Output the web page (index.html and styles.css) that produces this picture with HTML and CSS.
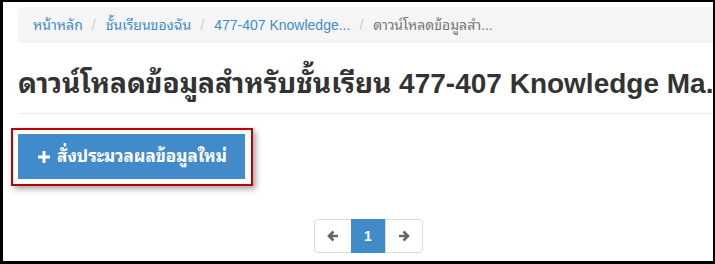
FILE: index.html
```html
<!DOCTYPE html>
<html lang="th">
<head>
<meta charset="utf-8">
<link rel="stylesheet" href="styles.css">
</head>
<body>
<div class="frame">
  <div class="container">
    <ol class="breadcrumb">
      <li><a href="#">หน้าหลัก</a></li>
      <li><a href="#">ชั้นเรียนของฉัน</a></li>
      <li><a href="#">477-407 Knowledge...</a></li>
      <li class="crumb-current">ดาวน์โหลดข้อมูลสำ...</li>
    </ol>
    <h1 class="page-header">ดาวน์โหลดข้อมูลสำหรับชั้นเรียน 477-407 Knowledge Ma...</h1>
    <div class="highlight">
      <a class="btn-primary" href="#">
        <svg class="plus" width="12" height="12" viewBox="0 0 12 12"><path d="M4.5 0h3v4.5H12v3H7.5V12h-3V7.5H0v-3h4.5z" fill="#fff"/></svg>
        <span>สั่งประมวลผลข้อมูลใหม่</span>
      </a>
    </div>
    <div class="pager-row">
      <ul class="pagination">
        <li class="page first"><svg width="12" height="12" viewBox="0 0 12 12"><path d="M11 6H2.5M6.5 1.5L2 6l4.5 4.5" fill="none" stroke="#666" stroke-width="2.6"/></svg></li>
        <li class="page current">1</li>
        <li class="page last"><svg width="12" height="12" viewBox="0 0 12 12"><path d="M1 6h8.5M5.5 1.5L10 6l-4.5 4.5" fill="none" stroke="#666" stroke-width="2.6"/></svg></li>
      </ul>
    </div>
  </div>
</div>
</body>
</html>
```

FILE: styles.css
```css
html, body {
  margin: 0;
  padding: 0;
  background: #fff;
}
body {
  font-family: "Liberation Sans", "Noto Sans Thai Looped", Arial, sans-serif;
  font-size: 14px;
  line-height: 20px;
  color: #333;
}
.frame {
  width: 715px;
  height: 264px;
  box-sizing: border-box;
  border-style: solid;
  border-color: #000;
  border-width: 2px 2px 3px 3px;
  overflow: hidden;
  background: #fff;
}
.container {
  width: 700px;
  padding: 5px 0 0 15px;
}
.breadcrumb {
  display: flex;
  list-style: none;
  margin: 0;
  padding: 8px 15px;
  height: 36px;
  box-sizing: border-box;
  background: #f5f5f5;
  border-radius: 4px;
  white-space: nowrap;
}
.breadcrumb li + li::before {
  content: "/";
  color: #ccc;
  padding: 0 10px 0 9px;
}
.breadcrumb a {
  color: #428bca;
  text-decoration: none;
}
.crumb-current {
  color: #777;
}
.page-header {
  margin: 25px 0 0;
  padding-bottom: 14px;
  border-bottom: 1px solid #eee;
  font-size: 28px;
  line-height: 31px;
  height: 31px;
  font-weight: bold;
  color: #333;
  white-space: nowrap;
}
.highlight {
  display: inline-block;
  margin: 14px 0 0 -7px;
  padding: 4px 6px 5px 5px;
  border: 2px solid #c00000;
  box-shadow: 3px 3px 6px rgba(0, 0, 0, 0.35);
}
.btn-primary {
  display: flex;
  align-items: center;
  justify-content: center;
  gap: 7px;
  width: 227px;
  height: 45px;
  box-sizing: border-box;
  padding-left: 2px;
  background: #428bca;
  color: #fff;
  font-size: 17px;
  font-weight: bold;
  text-decoration: none;
  white-space: nowrap;
}
.btn-primary .plus {
  flex: none;
}
.pager-row {
  display: flex;
  justify-content: center;
  margin-top: 33px;
}
.pagination {
  display: flex;
  list-style: none;
  margin: 0;
  padding: 0;
}
.page {
  display: flex;
  align-items: center;
  justify-content: center;
  height: 34px;
  box-sizing: border-box;
  border: 1px solid #ddd;
  background: #fff;
  font-weight: bold;
  font-size: 14px;
}
.page + .page {
  margin-left: -1px;
}
.first {
  width: 38px;
  border-radius: 4px 0 0 4px;
}
.current {
  width: 35px;
  background: #428bca;
  border-color: #428bca;
  color: #fff;
}
.last {
  width: 38px;
  border-radius: 0 4px 4px 0;
}
```
